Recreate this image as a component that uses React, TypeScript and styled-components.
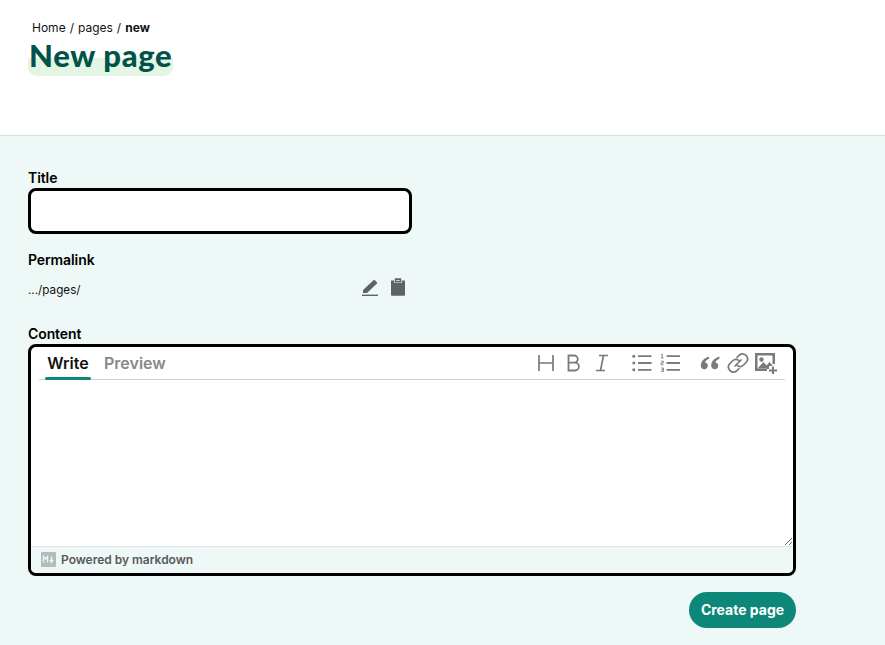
import React from "react";
import styled, { createGlobalStyle } from "styled-components";

const Global = createGlobalStyle`
  * { box-sizing: border-box; }
  html, body { margin: 0; padding: 0; background: #eef8f6; }
  body { font-family: Inter, "Liberation Sans", sans-serif; color: #000; overflow: hidden; }
`;
const Page = styled.div`width: 885px; height: 645px; display: flex; flex-direction: column;`;
const Header = styled.header`
  height: 136px; background: #fff; border-bottom: 1px solid #d5e5d2; padding: 20px 28px 0;
`;
const Crumbs = styled.nav`
  display: flex; gap: 4px; padding-left: 4px; font-size: 12px; line-height: 16px; color: #111;
  b { font-weight: 700; }
`;
const Heading = styled.h1`
  display: inline-block; margin: 0; padding: 0 1px; height: 40px; font-family: Lato, sans-serif; font-weight: 900;
  font-size: 31px; line-height: 38px; color: #03524a; letter-spacing: 0.65px;
  border-radius: 0 0 9px 9px;
  background: linear-gradient(#e3f6e4, #e3f6e4) no-repeat left bottom / 100% 18px;
`;
const Form = styled.form`flex: 1; padding: 33px 28px 0; display: flex; flex-direction: column;`;
const Label = styled.label`display: block; font-size: 14px; font-weight: 600; line-height: 17px; letter-spacing: -0.1px;`;
const TitleInput = styled.input`
  display: block; width: 384px; height: 46px; margin-top: 2px; border: 3px solid #000; border-radius: 8px; background: #fff; outline: none;
`;
const PermalinkBlock = styled.div`margin-top: 17px;`;
const PermalinkRow = styled.div`
  width: 384px; height: 28px; margin-top: 6px; display: flex; align-items: center; font-size: 11.7px; color: #111;
`;
const PermalinkText = styled.span`flex: 1; margin-top: 3px;`;
const IconRow = styled.div`display: flex; gap: 8px; color: #5f6363; margin-right: 4px; margin-top: -3px;`;
const ContentBlock = styled.div`margin-top: 23px;`;
const Editor = styled.div`
  width: 768px; height: 232px; margin-top: 2px; border: 3px solid #000; border-radius: 8px; background: #fff;
  display: flex; flex-direction: column; overflow: hidden;
`;
const Toolbar = styled.div`
  height: 33px; margin: 0 8px; border-bottom: 1px solid #cfd1d1; display: flex; justify-content: space-between; flex: none;
`;
const Tabs = styled.div`display: flex; gap: 13px;`;
const Tab = styled.div<{ $active?: boolean }>`
  position: relative;
  width: ${p => (p.$active ? "46px" : "auto")}; margin-left: ${p => (p.$active ? "6px" : "0")};
  height: 33px; padding-top: 6px; text-align: center; font-size: 16px; font-weight: 600; line-height: 20px;
  color: ${p => (p.$active ? "#111" : "#888")};
  &::after {
    content: ""; display: ${p => (p.$active ? "block" : "none")};
    position: absolute; left: 0; right: 0; bottom: 0; height: 3px; border-radius: 2px; background: #0e8577;
  }
`;
const Tools = styled.div`display: flex; align-items: center; color: #7a7a7a; padding: 0 9px 0 0;`;
const Tool = styled.span<{ $gap?: number }>`
  width: 20px; height: 20px; flex: none; display: flex; margin-left: ${p => p.$gap ?? 8}px; align-items: center; justify-content: center;
  svg { flex: none; }
`;
const TextArea = styled.textarea`
  flex: 1; display: block; width: 100%; border: none; outline: none; resize: vertical; background: #fff; min-height: 0;
`;
const Footer = styled.div`
  flex: none; height: 27px; background: #eef8f6; border-top: 1px solid #dbe2e1; display: flex; align-items: center; gap: 5px;
  padding: 0 0 1px 10px; font-size: 12px; font-weight: 600; color: #555b5d; letter-spacing: -0.02px;
`;
const Actions = styled.div`width: 768px; display: flex; justify-content: flex-end; margin-top: 16px;`;
const Submit = styled.button`
  width: 107px; height: 36px; border: none; border-radius: 18px; background: #0d8777; color: #fff;
  font-family: inherit; font-size: 14px; font-weight: 700; padding: 0 0 1px;
`;

const PencilIcon = () => (
  <svg width="20" height="20" viewBox="0 0 20 20" fill="currentColor">
    <path d="M3 13 13.500 3.200a1 1 0 0 1 1.400 0l2 2a1 1 0 0 1 0 1.400L7 16H3z" />
    <rect x="2" y="17.600" width="16" height="1.400" />
  </svg>
);
const ClipIcon = () => (
  <svg width="20" height="20" viewBox="0 0 20 20" fill="currentColor">
    <path d="M3 3.400h3.200V6h7.600V3.400H17v14.400a1 1 0 0 1-1 1H4a1 1 0 0 1-1-1z" />
    <path fillRule="evenodd" d="M6.800 1.200h6.400v4.200H6.800zM8.200 3v.8h3.600V3z" />
  </svg>
);
const HIcon = () => (
  <svg width="18" height="18" viewBox="0 0 18 18" fill="none" stroke="currentColor" strokeWidth="1.700">
    <path d="M2 1v16M16 1v16M2 9h14" />
  </svg>
);
const BIcon = () => (
  <svg width="18" height="18" viewBox="0 0 18 18" fill="none" stroke="currentColor" strokeWidth="1.800">
    <path d="M3.500 1.500h5.700a3.500 3.500 0 0 1 0 7.200H3.500zM3.500 8.700h6.500a3.900 3.900 0 0 1 0 7.800H3.500z" />
  </svg>
);
const IIcon = () => (
  <svg width="18" height="18" viewBox="0 0 18 18" fill="none" stroke="currentColor" strokeWidth="1.700">
    <path d="M6 1.500h9M3 16.500h9M10.500 1.500 7.500 16.500" />
  </svg>
);
const UlIcon = () => (
  <svg width="20" height="20" viewBox="0 0 20 20" fill="none" stroke="currentColor">
    <path d="M6 3.200h13.500M6 10h13.500M6 16.800h13.500" strokeWidth="1.800" />
    <circle cx="1.800" cy="3.200" r="1.500" fill="currentColor" stroke="none" />
    <circle cx="1.800" cy="10" r="1.500" fill="currentColor" stroke="none" />
    <circle cx="1.800" cy="16.800" r="1.500" fill="currentColor" stroke="none" />
  </svg>
);
const OlIcon = () => (
  <svg width="20" height="20" viewBox="0 0 20 20" fill="none" stroke="currentColor">
    <path d="M6.500 3.200h13.500M6.500 10h13.500M6.500 16.800h13.500" strokeWidth="1.800" />
    <path d="M1.200 1.600 2.200 1V5M1 5h2.500M1 8.200h2.300V10H1v1.800h2.500M1 15h2.400v3.400H1M1.500 16.700h1.900" strokeWidth=".9" />
  </svg>
);
const QuoteIcon = () => (
  <svg width="20" height="20" viewBox="0 0 20 20" fill="currentColor">
    <path d="M8.800 3.500C4.500 5 .8 8 .8 12.500c0 2.200 1.500 3.700 3.500 3.700s3.600-1.500 3.600-3.400c0-1.800-1.300-3.100-3-3.300.5-1.500 2-2.900 4.300-4zM19.200 3.500C14.900 5 11.200 8 11.200 12.500c0 2.200 1.500 3.700 3.500 3.700s3.600-1.500 3.600-3.400c0-1.800-1.300-3.100-3-3.300.5-1.500 2-2.900 4.300-4z" />
  </svg>
);
const LinkIcon = () => (
  <svg width="22" height="22" viewBox="0 0 22 22" fill="none" stroke="currentColor" strokeWidth="1.700" strokeLinecap="round">
    <path d="M10 5.500 12.500 3a5 5 0 0 1 7 7L16.500 13a5 5 0 0 1-6.500.4" />
    <path d="M12 16.500 9.500 19a5 5 0 0 1-7-7L5.500 9a5 5 0 0 1 6.500-.4" />
    <path d="M8 14 14 8" />
  </svg>
);
const ImageIcon = () => (
  <svg width="24" height="22" viewBox="0 0 24 22" fill="currentColor">
    <path fillRule="evenodd" d="M1 1h20v11h-2.500V3.500h-15v13H13V19H1z" />
    <circle cx="7.500" cy="7.500" r="2.200" />
    <path d="M3.500 16.500 9.500 10l3 3.500 3-3.500 3 3.500V14h-3.500v3H13v-.5z" />
    <path d="M18 14.500h2v3h3v2h-3v2.500h-2v-2.500h-3v-2h3z" />
  </svg>
);
const MdIcon = () => (
  <svg width="15" height="15" viewBox="0 0 15 15">
    <rect width="15" height="15" rx="1" fill="#b0bfbd" />
    <path d="M2.500 10.500v-6l2 2.500 2-2.500v6M10.500 4.500v4.500M8.800 8l1.700 2.200L12.200 8" fill="none" stroke="#eef8f6" strokeWidth="1.300" />
  </svg>
);

export default function App() {
  return (
    <Page>
      <Global />
      <Header>
        <Crumbs><span>Home</span><span>/</span><span>pages</span><span>/</span><b>new</b></Crumbs>
        <Heading>New page</Heading>
      </Header>
      <Form onSubmit={e => e.preventDefault()}>
        <div>
          <Label htmlFor="title">Title</Label>
          <TitleInput id="title" />
        </div>
        <PermalinkBlock>
          <Label>Permalink</Label>
          <PermalinkRow>
            <PermalinkText>.../pages/</PermalinkText>
            <IconRow><PencilIcon /><ClipIcon /></IconRow>
          </PermalinkRow>
        </PermalinkBlock>
        <ContentBlock>
          <Label htmlFor="content">Content</Label>
          <Editor>
            <Toolbar>
              <Tabs>
                <Tab $active>Write</Tab>
                <Tab>Preview</Tab>
              </Tabs>
              <Tools>
                <Tool><HIcon /></Tool>
                <Tool><BIcon /></Tool>
                <Tool><IIcon /></Tool>
                <Tool $gap={20}><UlIcon /></Tool>
                <Tool><OlIcon /></Tool>
                <Tool $gap={20}><QuoteIcon /></Tool>
                <Tool><LinkIcon /></Tool>
                <Tool><ImageIcon /></Tool>
              </Tools>
            </Toolbar>
            <TextArea id="content" />
            <Footer><MdIcon />Powered by markdown</Footer>
          </Editor>
        </ContentBlock>
        <Actions><Submit type="submit">Create page</Submit></Actions>
      </Form>
    </Page>
  );
}
